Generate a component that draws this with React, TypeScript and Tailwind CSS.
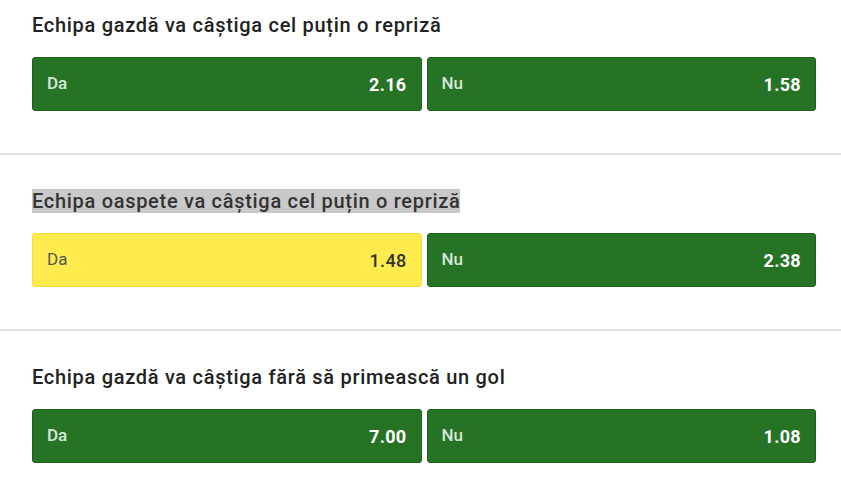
import React from "react";

type Sel = { label: string; odd: string; active?: boolean };
type Market = { title: string; highlight?: boolean; sels: Sel[] };

const markets: Market[] = [
  {
    title: "Echipa gazdă va câștiga cel puțin o repriză",
    sels: [
      { label: "Da", odd: "2.16" },
      { label: "Nu", odd: "1.58" },
    ],
  },
  {
    title: "Echipa oaspete va câștiga cel puțin o repriză",
    highlight: true,
    sels: [
      { label: "Da", odd: "1.48", active: true },
      { label: "Nu", odd: "2.38" },
    ],
  },
  {
    title: "Echipa gazdă va câștiga fără să primească un gol",
    sels: [
      { label: "Da", odd: "7.00" },
      { label: "Nu", odd: "1.08" },
    ],
  },
];

function Button({ s }: { s: Sel }) {
  if (s.active) {
    return (
      <div className="flex h-[54px] items-center justify-between rounded-[3px] border border-[#f5de3c] bg-[#ffeb4d] pl-[14px] pr-[14px]">
        <span className="text-[17px] font-normal text-[#555]">{s.label}</span>
        <span className="text-[18px] font-medium tracking-[0.3px] text-[#333]">{s.odd}</span>
      </div>
    );
  }
  return (
    <div className="flex h-[54px] items-center justify-between rounded-[3px] border border-[#1f621f] bg-[#267326] pl-[14px] pr-[14px]">
      <span className="text-[17px] font-medium text-[#d6e6d6]">{s.label}</span>
      <span className="text-[18px] font-bold tracking-[0.3px] text-white">{s.odd}</span>
    </div>
  );
}

export default function App() {
  return (
    <div
      className="min-h-[502px] w-[841px] bg-white"
      style={{ fontFamily: "Roboto, 'Liberation Sans', sans-serif" }}
    >
      {markets.map((m, i) => (
        <div key={i}>
          {i > 0 && <div className="h-[2px] w-full bg-[#e4e4e4]" />}
          <div className={`pl-[32px] pr-[25px] ${i === 0 ? "pt-[14px]" : "pt-[35px]"} pb-[42px]`}>
            <div className="text-[20px] font-medium leading-[22px] tracking-[0.7px]">
              {m.highlight ? (
                <span className="bg-[#c9c9c9] text-[#333]">{m.title}</span>
              ) : (
                <span className="text-[#222]">{m.title}</span>
              )}
            </div>
            <div className="mt-[21px] grid grid-cols-2 gap-[5px]">
              {m.sels.map((s, j) => (
                <Button key={j} s={s} />
              ))}
            </div>
          </div>
        </div>
      ))}
    </div>
  );
}
